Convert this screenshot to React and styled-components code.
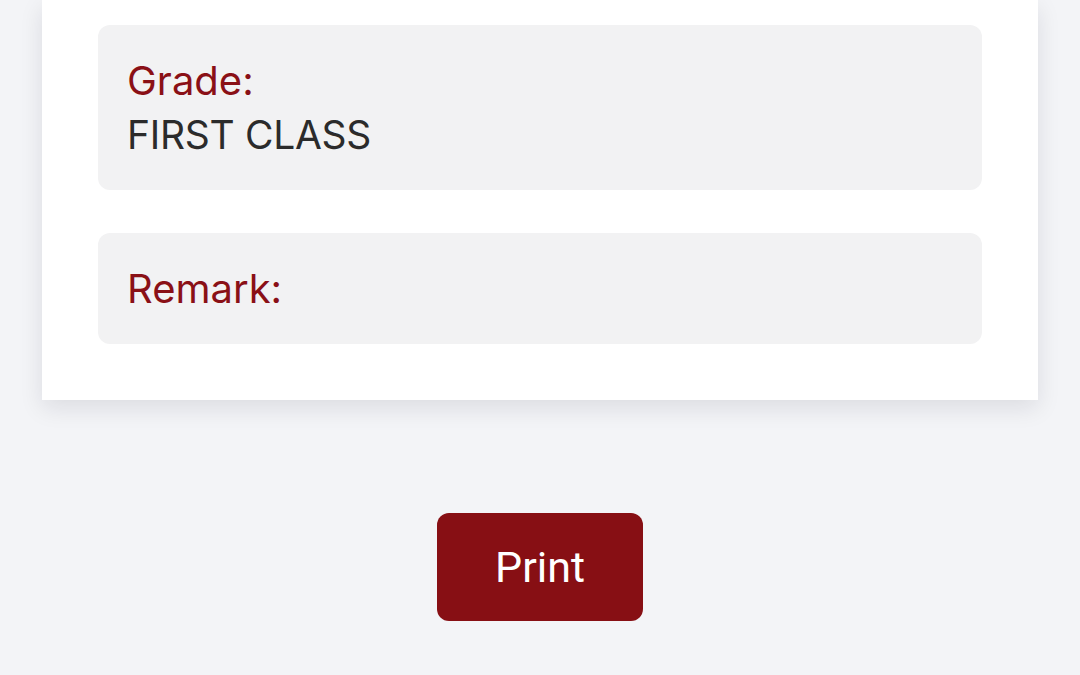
import styled, { createGlobalStyle } from "styled-components";

const GlobalStyle = createGlobalStyle`
  html, body {
    margin: 0;
    padding: 0;
    background: #f3f4f7;
    font-family: "Inter", "Noto Sans", sans-serif;
  }
`;

const Page = styled.div`
  display: flex;
  flex-direction: column;
  align-items: center;
  padding: 0 42px 54px;
  min-height: 675px;
  box-sizing: border-box;
`;

const Card = styled.div`
  align-self: stretch;
  display: flex;
  flex-direction: column;
  gap: 43px;
  padding: 25px 56px 56px;
  background: #ffffff;
  box-shadow: 0 8px 22px rgba(20, 24, 40, 0.1);
`;

const Field = styled.div`
  display: flex;
  flex-direction: column;
  padding: 28.5px 29px;
  background: #f2f2f3;
  border-radius: 12px;
`;

const Label = styled.div`
  font-size: 40px;
  line-height: 54px;
  color: #8a1016;
`;

const Value = styled.div`
  font-size: 39px;
  line-height: 54px;
  color: #2b2b2b;
  letter-spacing: -0.3px;
`;

const PrintButton = styled.button`
  margin-top: 113px;
  width: 206px;
  height: 108px;
  border: none;
  border-radius: 12px;
  background: #870f14;
  color: #ffffff;
  font-family: "Roboto", "Inter", sans-serif;
  font-size: 43px;
  cursor: pointer;
`;

const fields = [
  { label: "Grade:", value: "FIRST CLASS" },
  { label: "Remark:", value: "" },
];

function App() {
  return (
    <>
      <GlobalStyle />
      <Page>
        <Card>
          {fields.map((f) => (
            <Field key={f.label}>
              <Label>{f.label}</Label>
              {f.value && <Value>{f.value}</Value>}
            </Field>
          ))}
        </Card>
        <PrintButton onClick={() => window.print()}>Print</PrintButton>
      </Page>
    </>
  );
}

export default App;
